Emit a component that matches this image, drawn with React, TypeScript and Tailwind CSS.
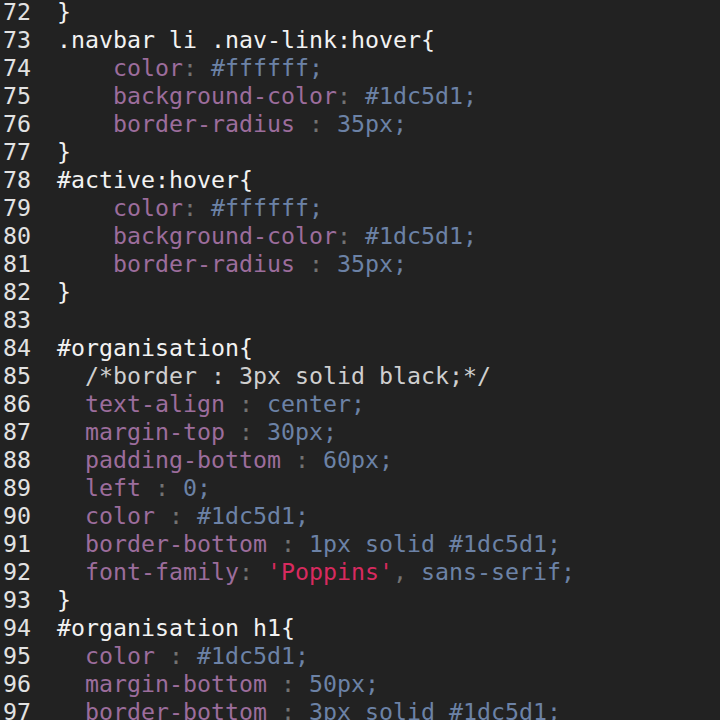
type Tok = [string, string];

const P = "text-[#9c6d9c]"; // property
const V = "text-[#6c82a6]"; // value
const C = "text-[#727272]"; // colon / punctuation
const S = "text-[#f2f2f2]"; // selector
const M = "text-[#cfcfcf]"; // comment
const R = "text-[#d82a5f]"; // string

const decl = (indent: string, prop: string, sep: string, value: Tok[]): Tok[] => [
  [S, indent],
  [P, prop],
  [C, sep],
  ...value,
];

const lines: Tok[][] = [
  [[S, "}"]],
  [[S, ".navbar li .nav-link:hover{"]],
  decl("    ", "color", ": ", [[V, "#ffffff;"]]),
  decl("    ", "background-color", ": ", [[V, "#1dc5d1;"]]),
  decl("    ", "border-radius", " : ", [[V, "35px;"]]),
  [[S, "}"]],
  [[S, "#active:hover{"]],
  decl("    ", "color", ": ", [[V, "#ffffff;"]]),
  decl("    ", "background-color", ": ", [[V, "#1dc5d1;"]]),
  decl("    ", "border-radius", " : ", [[V, "35px;"]]),
  [[S, "}"]],
  [],
  [[S, "#organisation{"]],
  [[M, "  /*border : 3px solid black;*/"]],
  decl("  ", "text-align", " : ", [[V, "center;"]]),
  decl("  ", "margin-top", " : ", [[V, "30px;"]]),
  decl("  ", "padding-bottom", " : ", [[V, "60px;"]]),
  decl("  ", "left", " : ", [[V, "0;"]]),
  decl("  ", "color", " : ", [[V, "#1dc5d1;"]]),
  decl("  ", "border-bottom", " : ", [[V, "1px solid #1dc5d1;"]]),
  decl("  ", "font-family", ": ", [
    [R, "'Poppins'"],
    [C, ", "],
    [V, "sans-serif;"],
  ]),
  [[S, "}"]],
  [[S, "#organisation h1{"]],
  decl("  ", "color", " : ", [[V, "#1dc5d1;"]]),
  decl("  ", "margin-bottom", " : ", [[V, "50px;"]]),
  decl("  ", "border-bottom", " : ", [[V, "3px solid #1dc5d1;"]]),
];

export default function App() {
  return (
    <div className="h-[720px] w-[720px] overflow-hidden bg-[#222222]">
      <div className="-mt-[2px] flex flex-col font-['DejaVu_Sans_Mono',monospace] text-[23.25px] leading-[28px] whitespace-pre">
        {lines.map((toks, i) => (
          <div key={i} className="flex h-[28px]">
            <span className="w-[57px] shrink-0 pl-[3px] text-[#e2e2e2]">{72 + i}</span>
            <span>
              {toks.map(([cls, text], j) => (
                <span key={j} className={cls}>
                  {text}
                </span>
              ))}
            </span>
          </div>
        ))}
      </div>
    </div>
  );
}
